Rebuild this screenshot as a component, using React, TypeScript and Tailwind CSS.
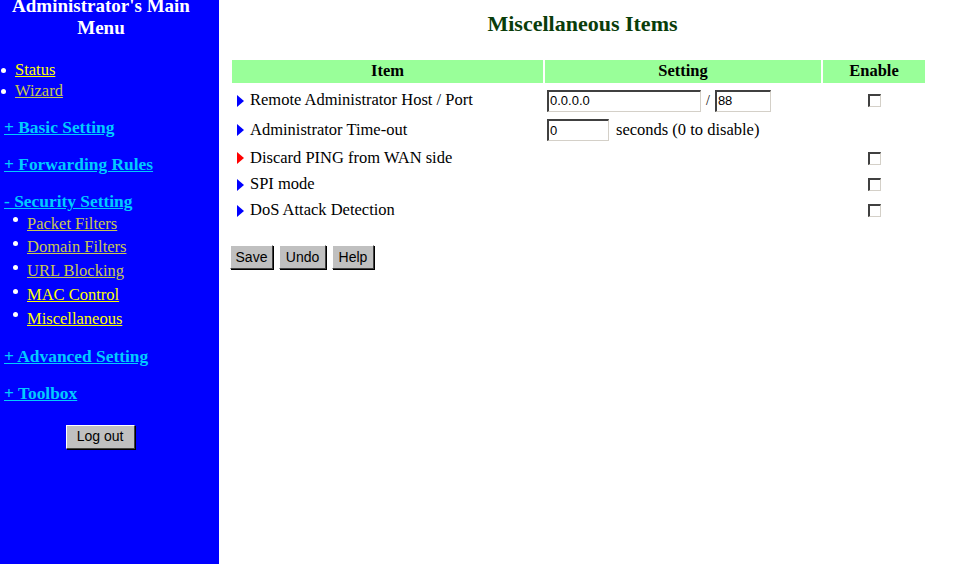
import React from "react";

const serif = { fontFamily: '"Liberation Serif", "Times New Roman", serif' };

function Arrow({ red }: { red?: boolean }) {
  return (
    <svg width="7" height="12" viewBox="0 0 7 12" className="shrink-0">
      <polygon points="0,0 7,6 0,12" fill={red ? "#ff0000" : "#0000ff"} />
    </svg>
  );
}

function Check() {
  return (
    <span className="inline-block w-[13px] h-[13px] bg-white border-t-2 border-l-2 border-t-[#404040] border-l-[#404040] border-b border-r border-b-[#d4d0c8] border-r-[#d4d0c8]" />
  );
}

function TextInput({ w, value }: { w: string; value: string }) {
  return (
    <span
      className={`inline-flex items-center h-[22px] ${w} bg-white border-t-2 border-l-2 border-t-[#404040] border-l-[#404040] border-b border-r border-b-[#d4d0c8] border-r-[#d4d0c8] pl-[1px] text-[13px] text-black`}
      style={{ fontFamily: '"Liberation Sans", Arial, sans-serif' }}
    >
      {value}
    </span>
  );
}

function Btn({ label, w }: { label: string; w: string }) {
  return (
    <span
      className={`inline-flex items-center justify-center h-[24px] ${w} bg-[#c0c0c0] border border-t-white border-l-white border-b-[#404040] border-r-[#404040] shadow-[1px_1px_0_#000] text-[14px] text-black`}
      style={{ fontFamily: '"Liberation Sans", Arial, sans-serif' }}
    >
      {label}
    </span>
  );
}

function SubLink({ label, bright }: { label: string; bright?: boolean }) {
  return (
    <div className="h-[23.75px] flex items-center pl-[13px]">
      <span className="w-[5px] h-[5px] rounded-full bg-white mr-[9px] -mt-[8px]" />
      <span className={`text-[16.5px] underline ${bright ? "text-[#ffff00]" : "text-[#c8c850]"}`}>{label}</span>
    </div>
  );
}

function Section({ label }: { label: string }) {
  return (
    <div className="h-[37px] flex items-center pl-[4px]">
      <span className="text-[17.4px] font-bold underline text-[#00ccff] whitespace-nowrap">{label}</span>
    </div>
  );
}

export default function App() {
  return (
    <div className="flex w-[955px] h-[564px] overflow-hidden bg-white" style={serif}>
      <div className="w-[219px] shrink-0 bg-[#0000ff] flex flex-col">
        <div className="w-[202px] text-white font-bold text-[19px] leading-[22px] text-center -mt-[5px]">
          Administrator's Main
          <br />
          Menu
        </div>
        <div className="mt-[21px]">
          <div className="h-[21px] flex items-center pl-[1px]">
            <span className="w-[5px] h-[5px] rounded-full bg-white mr-[9px]" />
            <span className="text-[16.5px] underline text-[#ffff00]">Status</span>
          </div>
          <div className="h-[21px] flex items-center pl-[1px]">
            <span className="w-[5px] h-[5px] rounded-full bg-white mr-[9px]" />
            <span className="text-[16.5px] underline text-[#c8c850]">Wizard</span>
          </div>
        </div>
        <div className="mt-[7px]">
          <Section label="+ Basic Setting" />
          <Section label="+ Forwarding Rules" />
          <div className="h-[36px] flex items-center pl-[4px]">
            <span className="text-[17.4px] font-bold underline text-[#00ccff]">- Security Setting</span>
          </div>
          <div className="-mt-[7px]">
            <SubLink label="Packet Filters" />
            <SubLink label="Domain Filters" />
            <SubLink label="URL Blocking" />
            <SubLink label="MAC Control" bright />
            <SubLink label="Miscellaneous" bright />
          </div>
          <div className="mt-[7px]">
            <Section label="+ Advanced Setting" />
            <Section label="+ Toolbox" />
          </div>
        </div>
        <div className="w-[200px] flex justify-center mt-[13px]">
          <Btn label="Log out" w="w-[69px]" />
        </div>
      </div>

      <div className="flex-1 pl-[13px] pr-[30px]">
        <div className="w-[693px]">
          <div className="h-[60px] flex items-start justify-center pt-[10px]">
            <h1 className="text-[22px] font-bold text-[#0a3d0a] leading-[28px] pl-[8px]">Miscellaneous Items</h1>
          </div>
          <div className="grid grid-cols-[311px_276px_102px] gap-x-[2px] text-[16.5px] text-black">
            <div className="h-[23px] bg-[#99ff99] flex items-center justify-center font-bold">Item</div>
            <div className="h-[23px] bg-[#99ff99] flex items-center justify-center font-bold">Setting</div>
            <div className="h-[23px] bg-[#99ff99] flex items-center justify-center font-bold">Enable</div>

            <div className="h-[33px] flex items-center gap-[6px] pl-[5px] pt-[2px] whitespace-nowrap">
              <Arrow /> Remote Administrator Host / Port
            </div>
            <div className="h-[33px] flex items-center pl-[2px] pt-[2px]">
              <TextInput w="w-[154px]" value="0.0.0.0" />
              <span className="mx-[5px] text-[14px]">/</span>
              <TextInput w="w-[56px]" value="88" />
            </div>
            <div className="h-[33px] flex items-center justify-center pt-[2px]">
              <Check />
            </div>

            <div className="h-[28px] flex items-center gap-[6px] pl-[5px]">
              <Arrow /> Administrator Time-out
            </div>
            <div className="h-[28px] flex items-center pl-[2px] whitespace-nowrap">
              <TextInput w="w-[62px]" value="0" />
              <span className="ml-[7px]">seconds (0 to disable)</span>
            </div>
            <div className="h-[28px]" />

            <div className="h-[28px] flex items-center gap-[6px] pl-[5px]">
              <Arrow red /> Discard PING from WAN side
            </div>
            <div className="h-[28px]" />
            <div className="h-[28px] flex items-center justify-center">
              <Check />
            </div>

            <div className="h-[25px] flex items-center gap-[6px] pl-[5px]">
              <Arrow /> SPI mode
            </div>
            <div className="h-[25px]" />
            <div className="h-[25px] flex items-center justify-center">
              <Check />
            </div>

            <div className="h-[27px] flex items-center gap-[6px] pl-[5px]">
              <Arrow /> DoS Attack Detection
            </div>
            <div className="h-[27px]" />
            <div className="h-[27px] flex items-center justify-center">
              <Check />
            </div>
          </div>
          <div className="flex gap-[6px] mt-[21px] -ml-[2px]">
            <Btn label="Save" w="w-[43px]" />
            <Btn label="Undo" w="w-[47px]" />
            <Btn label="Help" w="w-[42px]" />
          </div>
        </div>
      </div>
    </div>
  );
}
